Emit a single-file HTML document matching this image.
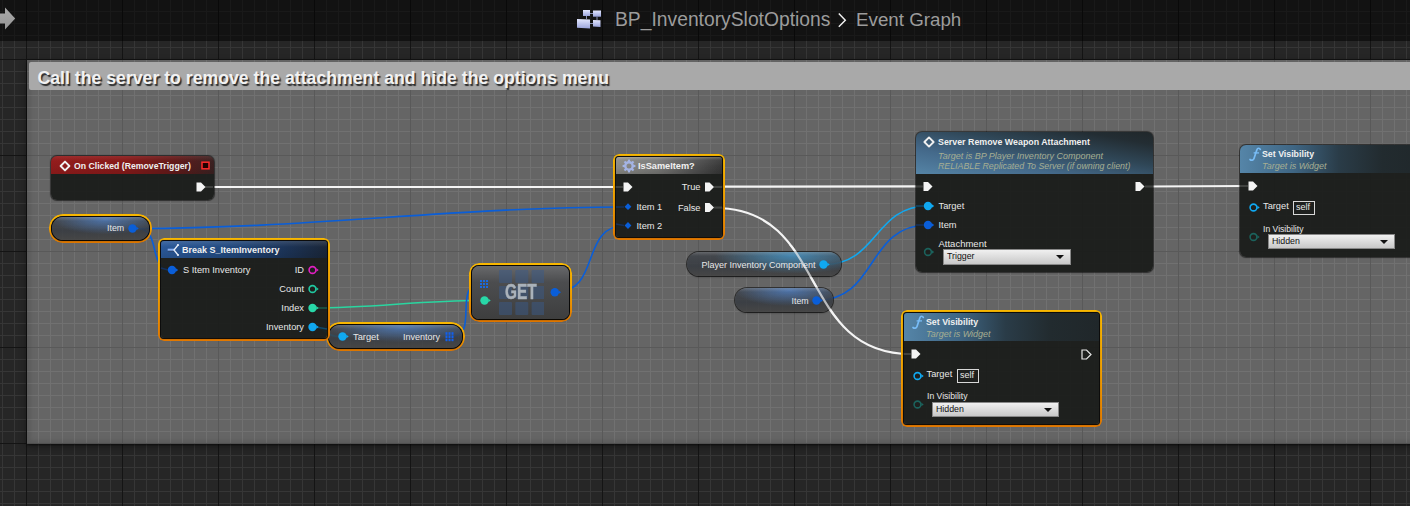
<!DOCTYPE html>
<html><head><meta charset="utf-8"><style>
*{margin:0;padding:0;box-sizing:border-box}
html,body{width:1410px;height:506px;overflow:hidden;background:#262626;font-family:'Liberation Sans', sans-serif;}
#grid{position:absolute;left:0;top:0;width:1410px;height:506px;
 background-color:#262626;
 background-image:
  linear-gradient(to right, #141414 1px, transparent 1px),
  linear-gradient(to bottom, #141414 1px, transparent 1px),
  linear-gradient(to right, #363636 1px, transparent 1px),
  linear-gradient(to bottom, #363636 1px, transparent 1px);
 background-size:96px 96px,96px 96px,12px 12px,12px 12px;
 background-position:26px 0,0 59px,2px 0,0 11px;
}
#topbar{position:absolute;left:0;top:0;width:1410px;height:41px;background:rgba(0,0,0,0.52);}
.abs{position:absolute}
#comment{position:absolute;left:27px;top:60px;width:1400px;height:384px;background:rgba(255,255,255,0.295);
  box-shadow:inset 3px -3px 5px rgba(0,0,0,0.12), 0 3px 8px rgba(0,0,0,0.3), 0 1px 2px rgba(0,0,0,0.6);}
#ctitle{position:absolute;left:29px;top:62px;width:1400px;height:28px;background:#a9a9a9;border-radius:2px;}
#ctext{position:absolute;left:37.5px;top:67.2px;font-size:17.68px;font-weight:bold;color:#f2f2f2;white-space:nowrap;
  text-shadow:1.5px 1.5px 1px rgba(0,0,0,0.75);line-height:22px}
.node{position:absolute;border-radius:6px;background:rgba(26,28,26,0.95);box-shadow:0 0 1px 1px rgba(0,0,0,0.55);overflow:hidden}
.selb{position:absolute;border:2px solid transparent;background:linear-gradient(to bottom,#f9b800 0%,#f0a000 50%,#e27800 100%) border-box;
 -webkit-mask:linear-gradient(#000 0 0) padding-box,linear-gradient(#000 0 0);-webkit-mask-composite:xor;mask-composite:exclude;}
.selr{position:absolute;border:1px solid rgba(8,8,8,0.8);border-bottom:1.5px solid rgba(40,24,6,0.95);background:transparent}
.hdr{position:absolute;left:0;top:0;right:0}
.t{position:absolute;white-space:nowrap;color:#e8e8e8;font-size:9.25px;line-height:12px}
.tb{position:absolute;white-space:nowrap;color:#f0f0f0;font-size:8.8px;font-weight:bold;line-height:12px}
.ti{position:absolute;white-space:nowrap;color:#a6ae92;font-size:9px;font-style:italic;line-height:10px}
.pill{position:absolute;border-radius:13px;
  background:linear-gradient(to bottom, rgba(255,255,255,0.16) 0px, rgba(255,255,255,0.0) 4px),
   radial-gradient(ellipse 55% 65% at 55% 10%, rgba(80,130,200,0.75), rgba(80,130,200,0) 100%),
   linear-gradient(to bottom, rgba(66,70,76,0.88) 0%, rgba(54,58,64,0.88) 60%, rgba(66,66,66,0.88) 100%);
  box-shadow:0 0 0 1px rgba(0,0,0,0.55), 0 1px 2px rgba(0,0,0,0.45)}
.pc{background:linear-gradient(to bottom, rgba(255,255,255,0.16) 0px, rgba(255,255,255,0.0) 4px),
   radial-gradient(ellipse 50% 75% at 68% 15%, rgba(70,150,200,0.8), rgba(70,150,200,0) 100%),
   linear-gradient(to bottom, rgba(66,70,76,0.88) 0%, rgba(54,58,64,0.88) 60%, rgba(66,66,66,0.88) 100%)}
.dd{position:absolute;background:linear-gradient(to bottom,#f0f0f0,#c8c8c8);border:1px solid #888;color:#111;font-size:8.8px;line-height:13px;padding-left:3px;white-space:nowrap}
.dd:after{content:'';position:absolute;right:6px;top:5px;border-left:4px solid transparent;border-right:4px solid transparent;border-top:4px solid #111}
.selfbox{position:absolute;border:1px solid #d8d8d8;color:#e8e8e8;font-size:9px;line-height:11px;padding:0 2px;white-space:nowrap}
</style></head>
<body>
<div id="grid"></div><div id="topbar"></div><div id="comment"></div><div id="ctitle"></div><div id="ctext">Call the server to remove the attachment and hide the options menu</div><svg class="abs" style="left:0;top:0" width="1410" height="506"><path d="M214,187 L622,187" stroke="#f4f4f4" stroke-width="2.2" fill="none"/><path d="M715,186.6 L922,186.4" stroke="#f4f4f4" stroke-width="2.2" fill="none"/><path d="M1145,186.5 L1247,186" stroke="#f4f4f4" stroke-width="2.2" fill="none"/><path d="M715,208 C829.0,208 797.0,354 911,354" stroke="#f4f4f4" stroke-width="2.2" fill="none"/><path d="M137,228.5 C306.83333333333337,228.5 455.16666666666663,207 625,207" stroke="#0a5ed8" stroke-width="1.6" fill="none"/><path d="M137,228.5 C162.5,228.5 146.5,270 172,270" stroke="#0a5ed8" stroke-width="1.6" fill="none"/><path d="M313,308 C371.1666666666667,308 421.8333333333333,300.5 480,300.5" stroke="#2ad6a0" stroke-width="1.6" fill="none"/><path d="M313,327 C324.5,327 326.5,336.5 338,336.5" stroke="#10a8f0" stroke-width="1.6" fill="none"/><path d="M452,336.5 C478.8333333333333,336.5 453.1666666666667,284 480,284" stroke="#0a5ed8" stroke-width="1.6" fill="none"/><path d="M556,292 C601.1666666666666,292 579.8333333333334,225.5 625,225.5" stroke="#0a5ed8" stroke-width="1.6" fill="none"/><path d="M824,264.5 C878.1666666666666,264.5 873.8333333333334,206 928,206" stroke="#10a8f0" stroke-width="1.6" fill="none"/><path d="M816,300.5 C878.5,300.5 865.5,225 928,225" stroke="#0a5ed8" stroke-width="1.6" fill="none"/></svg><svg class="abs" style="left:0px;top:5px" width="18" height="28" viewBox="0 0 18 28"><defs><linearGradient id="ag" x1="0" y1="0" x2="0" y2="1"><stop offset="0" stop-color="#aaaaaa"/><stop offset="1" stop-color="#959595"/></linearGradient></defs><polygon points="0,8.5 5,8.5 5,2.4 15.2,13.5 5,24.6 5,18.6 0,18.6" fill="url(#ag)"/></svg><svg class="abs" style="left:576px;top:8px" width="28" height="24" viewBox="0 0 28 24"><defs><linearGradient id="ig" x1="0" y1="0" x2="0" y2="1"><stop offset="0" stop-color="#e4e8ff"/><stop offset="1" stop-color="#9aa4dc"/></linearGradient></defs><path d="M10.5,8 V11 M14,5.5 H17 M21,8.7 V12 M14,15.5 H17" stroke="#8890b0" stroke-width="1"/><rect x="7" y="2" width="7" height="6" fill="url(#ig)"/><rect x="17" y="2.5" width="8" height="6.2" fill="url(#ig)"/><polygon points="1,11 14,11.5 14,20.6 1,19.8" fill="url(#ig)"/><polygon points="17,12 24.5,12.3 24.5,19 17,18.6" fill="url(#ig)"/></svg><div class="t" style="left:615px;top:8.5px;font-size:19.3px;line-height:22px;color:#9c9c9c">BP_InventorySlotOptions</div><svg class="abs" style="left:835px;top:11px" width="14" height="18" viewBox="0 0 14 18"><polyline points="3.8,2.5 10.3,9.2 3.8,15.8" fill="none" stroke="#f0f0f0" stroke-width="1.45"/></svg><div class="t" style="left:856px;top:8.5px;font-size:18.75px;line-height:22px;color:#9c9c9c">Event Graph</div><div class="node" style="left:51px;top:156px;width:163px;height:44px;border-radius:6px;"><div class="hdr" style="height:18px;background:linear-gradient(to bottom, rgba(255,200,200,0.1) 0px, rgba(0,0,0,0) 5px, rgba(0,0,0,0.1) 100%), linear-gradient(to right,#941c1c 0%,#881a1a 45%,#641a1a 75%,#3a2222 100%)"></div></div><svg class="abs" style="left:58px;top:159px" width="14" height="14" viewBox="0 0 14 14"><polygon points="7,2.6 11.4,7 7,11.4 2.6,7" fill="none" stroke="#f0f0f0" stroke-width="1.9" stroke-linejoin="round"/></svg><div class="tb" style="left:74px;top:160px;font-size:8.7px">On Clicked (RemoveTrigger)</div><svg class="abs" style="left:200px;top:159.5px" width="12" height="12" viewBox="0 0 12 12"><rect x="2" y="2.2" width="7" height="6.6" fill="#200" stroke="#ff2a2a" stroke-width="1.5"/></svg><div class="selb" style="left:49px;top:214px;width:103px;height:29px;border-radius:14px"></div><div class="selr" style="left:51px;top:216px;width:99px;height:25px;border-radius:12px"></div><div class="pill" style="left:52px;top:217px;width:97px;height:23px;border-radius:11px;"></div><div class="t" style="left:107px;top:222px;font-size:8.8px">Item</div><div class="selb" style="left:326px;top:322px;width:139px;height:29px;border-radius:14px"></div><div class="selr" style="left:328px;top:324px;width:135px;height:25px;border-radius:12px"></div><div class="pill" style="left:329px;top:325px;width:133px;height:23px;border-radius:11px;"></div><div class="t" style="left:353px;top:330.5px;font-size:9.3px">Target</div><div class="t" style="left:403px;top:330.5px;font-size:9px">Inventory</div><div class="selb" style="left:158px;top:238px;width:172px;height:103px;border-radius:6px"></div><div class="selr" style="left:160px;top:240px;width:168px;height:99px;border-radius:4px"></div><div class="node" style="left:161px;top:241px;width:166px;height:97px;border-radius:3px;"><div class="hdr" style="height:17px;background:linear-gradient(to bottom, rgba(255,255,255,0.12) 0px, rgba(0,0,0,0) 6px, rgba(0,0,0,0.1) 100%), linear-gradient(to right,#2a5898 0%,#224a80 40%,#1c3458 75%,#1a2638 100%)"></div></div><svg class="abs" style="left:164px;top:242px" width="18" height="16" viewBox="0 0 18 16"><line x1="3.7" y1="8" x2="10" y2="8" stroke="#86aef0" stroke-width="2.6"/><line x1="3.7" y1="9.2" x2="10" y2="9.2" stroke="#182a48" stroke-width="0.8"/><polyline points="14,3 10,8 14,13" fill="none" stroke="#e8eef8" stroke-width="1.3"/><circle cx="14" cy="3" r="1.1" fill="#e8eef8"/><circle cx="14" cy="13" r="1.1" fill="#e8eef8"/></svg><div class="tb" style="left:182px;top:243.7px;font-size:9px">Break S_ItemInventory</div><div class="t" style="left:183px;top:264px;">S Item Inventory</div><div class="t" style="right:1106px;top:264px;">ID</div><div class="t" style="right:1106px;top:283px;">Count</div><div class="t" style="right:1106px;top:302px;">Index</div><div class="t" style="right:1106px;top:321px;">Inventory</div><div class="selb" style="left:469px;top:263px;width:103px;height:59px;border-radius:10px"></div><div class="selr" style="left:471px;top:265px;width:99px;height:55px;border-radius:8px"></div><div class="pill" style="left:472px;top:266px;width:97px;height:53px;border-radius:7px;background:linear-gradient(to bottom,#68696b 0%,#4c4d4f 30%,#444546 70%,#3e3e3e 100%);"></div><svg class="abs" style="left:499px;top:270px" width="45" height="45" viewBox="0 0 45 45"><rect x="0.0" y="0" width="13" height="13" rx="1" fill="#3a5a88" opacity="0.5"/><rect x="0.0" y="16" width="13" height="13" rx="1" fill="#3a5a88" opacity="0.5"/><rect x="0.0" y="32" width="13" height="13" rx="1" fill="#3a5a88" opacity="0.5"/><rect x="16.3" y="0" width="13" height="13" rx="1" fill="#3a5a88" opacity="0.5"/><rect x="16.3" y="16" width="13" height="13" rx="1" fill="#3a5a88" opacity="0.5"/><rect x="16.3" y="32" width="13" height="13" rx="1" fill="#3a5a88" opacity="0.5"/><rect x="32.6" y="0" width="13" height="13" rx="1" fill="#3a5a88" opacity="0.5"/><rect x="32.6" y="16" width="13" height="13" rx="1" fill="#3a5a88" opacity="0.5"/><rect x="32.6" y="32" width="13" height="13" rx="1" fill="#3a5a88" opacity="0.5"/></svg><div class="tb" style="left:504.5px;top:281.5px;font-size:21.5px;line-height:20px;color:#aab2ba;-webkit-text-stroke:0.5px #aab2ba;transform:scaleX(0.715);transform-origin:left top">GET</div><div class="selb" style="left:613px;top:154px;width:112px;height:86px;border-radius:6px"></div><div class="selr" style="left:615px;top:156px;width:108px;height:82px;border-radius:4px"></div><div class="node" style="left:616px;top:157px;width:106px;height:80px;border-radius:3px;"><div class="hdr" style="height:17px;background:linear-gradient(to bottom, rgba(250,245,220,0.28) 0px, rgba(255,255,255,0.06) 3px, rgba(0,0,0,0) 10px, rgba(0,0,0,0.12) 100%), linear-gradient(to right,#8a8a86 0%,#767674 40%,#505050 75%,#363636 100%)"></div></div><svg class="abs" style="left:621px;top:158px" width="16" height="16" viewBox="0 0 16 16"><circle cx="8" cy="8" r="3.7" fill="none" stroke="#a4b4e4" stroke-width="2.4"/><rect x="6.9" y="1.6" width="2.2" height="3" fill="#a4b4e4" transform="rotate(0 8 8)"/><rect x="6.9" y="1.6" width="2.2" height="3" fill="#a4b4e4" transform="rotate(45 8 8)"/><rect x="6.9" y="1.6" width="2.2" height="3" fill="#a4b4e4" transform="rotate(90 8 8)"/><rect x="6.9" y="1.6" width="2.2" height="3" fill="#a4b4e4" transform="rotate(135 8 8)"/><rect x="6.9" y="1.6" width="2.2" height="3" fill="#a4b4e4" transform="rotate(180 8 8)"/><rect x="6.9" y="1.6" width="2.2" height="3" fill="#a4b4e4" transform="rotate(225 8 8)"/><rect x="6.9" y="1.6" width="2.2" height="3" fill="#a4b4e4" transform="rotate(270 8 8)"/><rect x="6.9" y="1.6" width="2.2" height="3" fill="#a4b4e4" transform="rotate(315 8 8)"/></svg><div class="tb" style="left:638px;top:160px;font-size:9.2px">IsSameItem?</div><div class="t" style="right:709.5px;top:181px;">True</div><div class="t" style="right:709.5px;top:202px;">False</div><div class="t" style="left:636.5px;top:200.5px;">Item 1</div><div class="t" style="left:636.5px;top:219.5px;">Item 2</div><div class="pill pc" style="left:687px;top:252px;width:154px;height:24px;border-radius:12px;"></div><div class="t" style="left:701.5px;top:259px;font-size:9px">Player Inventory Component</div><div class="pill" style="left:735px;top:288px;width:98px;height:24px;border-radius:12px;"></div><div class="t" style="left:791.5px;top:294.5px;font-size:8.8px">Item</div><div class="node" style="left:916px;top:132px;width:237px;height:140px;border-radius:6px;"><div class="hdr" style="height:42px;background:linear-gradient(to top right,#5584a6 0%,#44698a 30%,#2f4656 60%,#232d33 85%,#20272a 100%)"></div></div><svg class="abs" style="left:922px;top:134.8px" width="14" height="14" viewBox="0 0 14 14"><polygon points="7,2.4 11.6,7 7,11.6 2.4,7" fill="none" stroke="#f0f0f0" stroke-width="1.9" stroke-linejoin="round"/></svg><div class="tb" style="left:938px;top:136px;font-size:8.85px">Server Remove Weapon Attachment</div><div class="ti" style="left:938px;top:151px;">Target is BP Player Inventory Component</div><div class="ti" style="left:938px;top:160.8px;font-size:8.8px">RELIABLE Replicated To Server (if owning client)</div><div class="t" style="left:938.5px;top:200px;">Target</div><div class="t" style="left:938.5px;top:219px;">Item</div><div class="t" style="left:938.5px;top:237.5px;font-size:9.5px">Attachment</div><div class="dd" style="left:943px;top:249px;width:128px;height:16px">Trigger</div><div class="selb" style="left:901px;top:310px;width:201px;height:117px;border-radius:6px"></div><div class="selr" style="left:903px;top:312px;width:197px;height:113px;border-radius:4px"></div><div class="node" style="left:904px;top:313px;width:195px;height:111px;border-radius:3px;"><div class="hdr" style="height:28px;background:linear-gradient(to right,#5585a8 0%,#3f6684 28%,#2a3c48 52%,#222b2f 75%,#20272a 100%)"></div></div><svg class="abs" style="left:910px;top:314px" width="16" height="16" viewBox="0 0 16 16"><path d="M13.3,3.4 C12.6,2 10.6,1.6 9.8,4 L7,12.4 C6.3,14.4 4.4,14.7 3,13.5" fill="none" stroke="#78bcf6" stroke-width="1.7" stroke-linecap="round"/><path d="M6.6,6.9 H12" stroke="#78bcf6" stroke-width="1.3"/></svg><div class="tb" style="left:926px;top:315.5px;font-size:8.8px">Set Visibility</div><div class="ti" style="left:926px;top:329px;">Target is Widget</div><div class="t" style="left:926.5px;top:368px;">Target</div><div class="selfbox" style="left:957px;top:369px;width:22px;height:14px">self</div><div class="t" style="left:927px;top:390px;font-size:8.6px">In Visibility</div><div class="dd" style="left:932px;top:402px;width:127px;height:15px">Hidden</div><div class="node" style="left:1240px;top:145px;width:190px;height:112px;border-radius:6px;"><div class="hdr" style="height:28px;background:linear-gradient(to right,#5585a8 0%,#3f6684 28%,#2a3c48 52%,#222b2f 75%,#20272a 100%)"></div></div><svg class="abs" style="left:1247px;top:146px" width="16" height="16" viewBox="0 0 16 16"><path d="M13.3,3.4 C12.6,2 10.6,1.6 9.8,4 L7,12.4 C6.3,14.4 4.4,14.7 3,13.5" fill="none" stroke="#78bcf6" stroke-width="1.7" stroke-linecap="round"/><path d="M6.6,6.9 H12" stroke="#78bcf6" stroke-width="1.3"/></svg><div class="tb" style="left:1262px;top:148px;font-size:8.8px">Set Visibility</div><div class="ti" style="left:1262px;top:161px;">Target is Widget</div><div class="t" style="left:1263px;top:200px;">Target</div><div class="selfbox" style="left:1293px;top:201px;width:22px;height:14px">self</div><div class="t" style="left:1263px;top:222.5px;font-size:8.6px">In Visibility</div><div class="dd" style="left:1268px;top:234px;width:127px;height:15px">Hidden</div><svg class="abs" style="left:0;top:0" width="1410" height="506"><line x1="205" y1="187" x2="213" y2="187" stroke="#404240" stroke-width="2"/><line x1="616" y1="187" x2="623" y2="187" stroke="#404240" stroke-width="2"/><line x1="714" y1="187" x2="722" y2="187" stroke="#404240" stroke-width="2"/><line x1="714" y1="207.5" x2="722" y2="207.5" stroke="#404240" stroke-width="2"/><line x1="916" y1="186.5" x2="923" y2="186.5" stroke="#404240" stroke-width="2"/><line x1="1145" y1="186.5" x2="1153" y2="186.5" stroke="#404240" stroke-width="2"/><line x1="904" y1="354" x2="911" y2="354" stroke="#404240" stroke-width="2"/><line x1="1240" y1="186" x2="1248" y2="186" stroke="#404240" stroke-width="2"/><line x1="316" y1="308" x2="327" y2="308" stroke="#1a5a48" stroke-width="1.5"/><line x1="316" y1="327" x2="327" y2="329" stroke="#10486a" stroke-width="1.5"/><line x1="161" y1="268" x2="168" y2="270" stroke="#16305a" stroke-width="1.5"/><line x1="616" y1="207" x2="624" y2="207" stroke="#16305a" stroke-width="1.5"/><line x1="616" y1="224" x2="624" y2="225.5" stroke="#16305a" stroke-width="1.5"/><line x1="916" y1="206" x2="924" y2="206" stroke="#10486a" stroke-width="1.5"/><line x1="916" y1="225" x2="924" y2="225" stroke="#16305a" stroke-width="1.5"/></svg><svg class="abs" style="left:0;top:0;opacity:0.65" width="1410" height="506"><defs><clipPath id="wc"><rect x="740" y="245" width="110" height="75"/></clipPath></defs><path d="M715,208 C829.0,208 797.0,354 911,354" stroke="#f4f4f4" stroke-width="2.2" fill="none" clip-path="url(#wc)"/></svg><svg class="abs" style="left:0;top:0" width="1410" height="506"><polygon points="196.5,182.5 201,182.5 205.5,187 201,191.5 196.5,191.5" fill="#f4f4f4"/><circle cx="132.5" cy="228.5" r="4.2" fill="#0a5ed8"/><polygon points="136.39999999999998,226.7 138.7,228.5 136.39999999999998,230.3" fill="#0a5ed8"/><circle cx="342.5" cy="336.5" r="4.2" fill="#10a8f0"/><polygon points="346.4,334.7 348.7,336.5 346.4,338.3" fill="#10a8f0"/><rect x="445.5" y="332.2" width="2" height="2.6" fill="#1060f0"/><rect x="445.5" y="335.4" width="2" height="2.6" fill="#1060f0"/><rect x="445.5" y="338.59999999999997" width="2" height="2.6" fill="#1060f0"/><rect x="448.5" y="332.2" width="2" height="2.6" fill="#1060f0"/><rect x="448.5" y="335.4" width="2" height="2.6" fill="#1060f0"/><rect x="448.5" y="338.59999999999997" width="2" height="2.6" fill="#1060f0"/><rect x="451.5" y="332.2" width="2" height="2.6" fill="#1060f0"/><rect x="451.5" y="335.4" width="2" height="2.6" fill="#1060f0"/><rect x="451.5" y="338.59999999999997" width="2" height="2.6" fill="#1060f0"/><circle cx="172" cy="270" r="4.2" fill="#0a5ed8"/><polygon points="175.89999999999998,268.2 178.2,270 175.89999999999998,271.8" fill="#0a5ed8"/><circle cx="312.5" cy="270" r="3.4000000000000004" fill="none" stroke="#e020c0" stroke-width="1.6"/><polygon points="316.4,268.2 318.7,270 316.4,271.8" fill="#e020c0"/><circle cx="312.5" cy="289" r="3.4000000000000004" fill="none" stroke="#20c8a0" stroke-width="1.6"/><polygon points="316.4,287.2 318.7,289 316.4,290.8" fill="#20c8a0"/><circle cx="312.5" cy="308" r="4.2" fill="#28d8a8"/><polygon points="316.4,306.2 318.7,308 316.4,309.8" fill="#28d8a8"/><circle cx="312.5" cy="327" r="4.2" fill="#10a8f0"/><polygon points="316.4,325.2 318.7,327 316.4,328.8" fill="#10a8f0"/><rect x="480" y="280" width="2" height="2" fill="#1a6ae0"/><rect x="480" y="283" width="2" height="2" fill="#1a6ae0"/><rect x="480" y="286" width="2" height="2" fill="#1a6ae0"/><rect x="483" y="280" width="2" height="2" fill="#1a6ae0"/><rect x="483" y="283" width="2" height="2" fill="#1a6ae0"/><rect x="483" y="286" width="2" height="2" fill="#1a6ae0"/><rect x="486" y="280" width="2" height="2" fill="#1a6ae0"/><rect x="486" y="283" width="2" height="2" fill="#1a6ae0"/><rect x="486" y="286" width="2" height="2" fill="#1a6ae0"/><circle cx="484.5" cy="300.5" r="4.2" fill="#28d8a8"/><polygon points="488.4,298.7 490.7,300.5 488.4,302.3" fill="#28d8a8"/><circle cx="554.8" cy="292.3" r="4.2" fill="#0a5ed8"/><polygon points="558.7,290.5 561.0,292.3 558.7,294.1" fill="#0a5ed8"/><polygon points="623.5,182.5 628,182.5 632.5,187 628,191.5 623.5,191.5" fill="#f4f4f4"/><polygon points="705.0,182.5 709.5,182.5 714.0,187 709.5,191.5 705.0,191.5" fill="#f4f4f4"/><polygon points="705.0,203.0 709.5,203.0 714.0,207.5 709.5,212.0 705.0,212.0" fill="#f4f4f4"/><polygon points="628,203.29999999999998 631.4,206.7 628,210.1 624.6,206.7" fill="#0a5ed8"/><polygon points="628,222.1 631.4,225.5 628,228.9 624.6,225.5" fill="#0a5ed8"/><circle cx="823.5" cy="264.5" r="4.2" fill="#10a8f0"/><polygon points="827.4000000000001,262.7 829.7,264.5 827.4000000000001,266.3" fill="#10a8f0"/><circle cx="816.5" cy="300.5" r="4.2" fill="#0a5ed8"/><polygon points="820.4000000000001,298.7 822.7,300.5 820.4000000000001,302.3" fill="#0a5ed8"/><polygon points="923.5,182.0 928,182.0 932.5,186.5 928,191.0 923.5,191.0" fill="#f4f4f4"/><polygon points="1135.5,182.0 1140,182.0 1144.5,186.5 1140,191.0 1135.5,191.0" fill="#f4f4f4"/><circle cx="928" cy="206" r="4.2" fill="#10a8f0"/><polygon points="931.9000000000001,204.2 934.2,206 931.9000000000001,207.8" fill="#10a8f0"/><circle cx="928" cy="225" r="4.2" fill="#0a5ed8"/><polygon points="931.9000000000001,223.2 934.2,225 931.9000000000001,226.8" fill="#0a5ed8"/><circle cx="928" cy="252" r="3.4000000000000004" fill="none" stroke="#1b625c" stroke-width="1.6"/><polygon points="931.9000000000001,250.2 934.2,252 931.9000000000001,253.8" fill="#1b625c"/><polygon points="911.5,349.5 916,349.5 920.5,354 916,358.5 911.5,358.5" fill="#f4f4f4"/><polygon points="1082.0,350.0 1086.5,350.0 1091.0,354.5 1086.5,359.0 1082.0,359.0" fill="none" stroke="#e8e8e8" stroke-width="1.2"/><circle cx="917.5" cy="376" r="3.4000000000000004" fill="none" stroke="#10a8f0" stroke-width="1.6"/><polygon points="921.4000000000001,374.2 923.7,376 921.4000000000001,377.8" fill="#10a8f0"/><circle cx="917.5" cy="404.5" r="3.4000000000000004" fill="none" stroke="#1b625c" stroke-width="1.6"/><polygon points="921.4000000000001,402.7 923.7,404.5 921.4000000000001,406.3" fill="#1b625c"/><polygon points="1248.5,181.5 1253,181.5 1257.5,186 1253,190.5 1248.5,190.5" fill="#f4f4f4"/><circle cx="1253.5" cy="207.5" r="3.4000000000000004" fill="none" stroke="#10a8f0" stroke-width="1.6"/><polygon points="1257.4,205.7 1259.7,207.5 1257.4,209.3" fill="#10a8f0"/><circle cx="1253.5" cy="237" r="3.4000000000000004" fill="none" stroke="#1b625c" stroke-width="1.6"/><polygon points="1257.4,235.2 1259.7,237 1257.4,238.8" fill="#1b625c"/></svg>
</body></html>
